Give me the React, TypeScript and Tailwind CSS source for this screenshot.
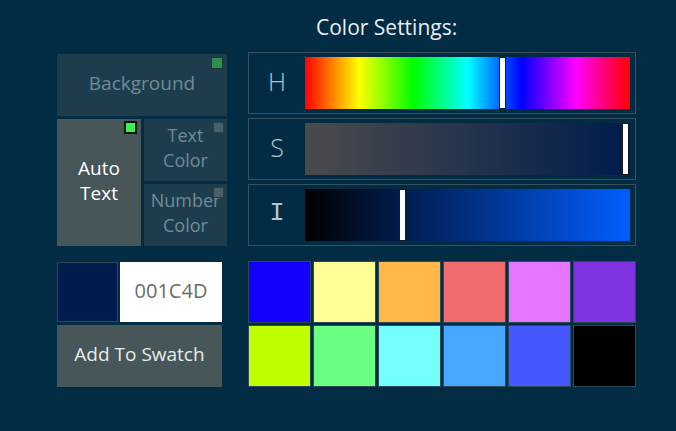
import React from "react";

const swatches = [
  "#1400ff", "#ffff96", "#ffb845", "#f06b6b", "#e375ff", "#7f33e0",
  "#bfff00", "#6bff83", "#75ffff", "#47a6ff", "#4558ff", "#000000",
];

const Indicator = ({ state }: { state: "on" | "dim" | "off" }) => {
  if (state === "on")
    return <div className="absolute top-[2px] right-[4px] w-[13px] h-[13px] bg-[#0a1a10] p-[2px]"><div className="w-full h-full bg-[#3ff04f]" /></div>;
  if (state === "dim")
    return <div className="absolute top-[3px] right-[4px] w-[12px] h-[12px] bg-[#183a30] p-[1px]"><div className="w-full h-full bg-[#2f8f4e]" /></div>;
  return <div className="absolute top-[3px] right-[3px] w-[11px] h-[11px] bg-[#22404e] p-[1px]"><div className="w-full h-full bg-[#4b5f69]" /></div>;
};

const Slider = ({ label, gradient, pos, mono }: { label: string; gradient: string; pos: number; mono?: boolean }) => (
  <div className="flex h-[62px] border border-[#3a505c] items-stretch">
    <div
      className={
        "w-[56px] flex items-center justify-center pb-[3px] text-[25px] font-light text-[#b4c6cc] " +
        (mono ? "font-['Liberation_Mono',monospace] text-[24px]" : "")
      }
    >
      {label}
    </div>
    <div className={"relative flex-1 my-[4px] mr-[5px] " + gradient}>
      <div
        className="absolute top-0 bottom-0 w-[7px] bg-white border border-[#1a1a1a]"
        style={{ left: `calc(${pos}% - 4px)` }}
      />
    </div>
  </div>
);

export default function App() {
  return (
    <div className="w-[676px] h-[431px] bg-[#022b44] font-['Open_Sans','Noto_Sans',sans-serif] relative">
      <div className="pl-[316px] pt-[12px] h-[52px] text-[21px] text-[#e8eef0]">Color Settings:</div>
      <div className="flex pl-[57px] gap-[21px]">
        {/* left column */}
        <div className="w-[170px] flex flex-col pt-[2px]">
          <div className="relative h-[62px] bg-[#1d3d4d] flex items-center justify-center pb-[4px] text-[19px] text-[#6f8b97]">
            Background
            <Indicator state="dim" />
          </div>
          <div className="flex gap-[3px] mt-[3px]">
            <div className="relative w-[84px] h-[127px] bg-[#465659] flex items-center justify-center pb-[4px] text-center text-[19px] leading-[25px] text-white">
              Auto<br />Text
              <Indicator state="on" />
            </div>
            <div className="flex flex-col gap-[3px] flex-1">
              <div className="relative h-[62px] bg-[#1d3d4d] flex items-center justify-center pb-[4px] text-center text-[18px] leading-[25px] text-[#6f8b97]">
                Text<br />Color
                <Indicator state="off" />
              </div>
              <div className="relative h-[62px] bg-[#1d3d4d] flex items-center justify-center pb-[4px] text-center text-[18px] leading-[25px] text-[#6f8b97]">
                Number<br />Color
                <Indicator state="off" />
              </div>
            </div>
          </div>
          <div className="flex gap-[2px] mt-[16px] w-[165px]">
            <div className="w-[61px] h-[60px] bg-[#001c4d] border border-[#2c4656]" />
            <div className="flex-1 h-[60px] bg-white flex items-center justify-center pb-[2px] text-[20px] text-[#6b6b6b]">001C4D</div>
          </div>
          <div className="w-[165px] h-[62px] mt-[3px] bg-[#475658] flex items-center justify-center pb-[4px] text-[19px] text-[#e6ecec]">
            Add To Swatch
          </div>
        </div>
        {/* right column */}
        <div className="w-[388px] flex flex-col">
          <div className="flex flex-col gap-[4px]">
            <Slider label="H" pos={60.8} gradient="bg-[linear-gradient(to_right,#ff0000,#ffff00,#00ff00,#00ffff,#0000ff,#ff00ff,#ff0000)]" />
            <Slider label="S" pos={98.8} gradient="bg-[linear-gradient(to_right,#4b4b4b,#001c4d)]" />
            <Slider label="I" pos={30.2} mono gradient="bg-[linear-gradient(to_right,#000000,#005eff)]" />
          </div>
          <div className="grid grid-cols-6 gap-[2px] mt-[15px]">
            {swatches.map((c, i) => (
              <div key={i} className="h-[62px] border border-[#2a4a5a]" style={{ backgroundColor: c }} />
            ))}
          </div>
        </div>
      </div>
    </div>
  );
}
